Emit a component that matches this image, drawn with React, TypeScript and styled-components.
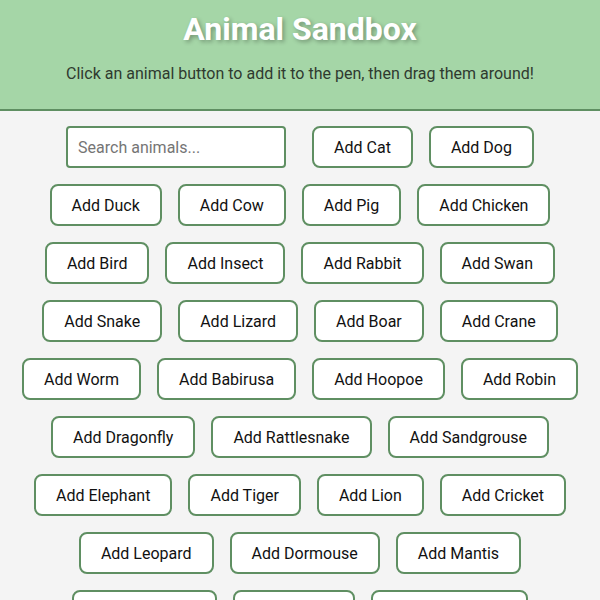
import React, { useState } from "react";
import styled, { createGlobalStyle } from "styled-components";

const GlobalStyle = createGlobalStyle`
  body {
    margin: 0;
    background: #f4f4f4;
    font-family: Roboto, "Liberation Sans", Arial, sans-serif;
  }
`;

const Header = styled.header`
  background: #a5d6a7;
  border-bottom: 2px solid #5f8f62;
  padding: 10px 20px;
  text-align: center;
`;

const Title = styled.h1`
  margin: 0;
  font-size: 32px;
  font-weight: 700;
  color: #fff;
  text-shadow: 2px 2px 4px rgba(0, 0, 0, 0.3);
`;

const Subtitle = styled.p`
  margin: 16px 0;
  font-size: 16px;
  color: #2f3a2f;
`;

const Controls = styled.div`
  display: flex;
  flex-wrap: wrap;
  justify-content: center;
  gap: 16px;
  padding: 15px 16px 16px;
`;

const SearchInput = styled.input`
  box-sizing: border-box;
  width: 220px;
  height: 42px;
  margin-right: 10px;
  padding: 10px;
  border: 2px solid #5f8f62;
  border-radius: 4px;
  background: #fff;
  font-family: inherit;
  font-size: 16px;
  color: #222;

  &::placeholder {
    color: #757575;
  }
`;

const AddButton = styled.button`
  box-sizing: border-box;
  height: 42px;
  padding: 10px 20px;
  border: 2px solid #5f8f62;
  border-radius: 8px;
  background: #fff;
  font-family: inherit;
  font-size: 16px;
  color: #111;
  cursor: pointer;
  transition: background 0.2s;

  &:hover {
    background: #e8f5e9;
  }
`;

const animals = [
  "Cat", "Dog", "Duck", "Cow", "Pig", "Chicken", "Bird", "Insect", "Rabbit",
  "Swan", "Snake", "Lizard", "Boar", "Crane", "Worm", "Babirusa", "Hoopoe",
  "Robin", "Dragonfly", "Rattlesnake", "Sandgrouse", "Elephant", "Tiger",
  "Lion", "Cricket", "Leopard", "Dormouse", "Mantis", "Kangaroo", "Camel",
  "Chameleon",
];

const App: React.FC = () => {
  const [query, setQuery] = useState("");

  const shown = animals.filter((a) =>
    a.toLowerCase().includes(query.toLowerCase())
  );

  return (
    <>
      <GlobalStyle />
      <Header>
        <Title>Animal Sandbox</Title>
        <Subtitle>
          Click an animal button to add it to the pen, then drag them around!
        </Subtitle>
      </Header>
      <Controls>
        <SearchInput
          placeholder="Search animals..."
          value={query}
          onChange={(e) => setQuery(e.target.value)}
        />
        {shown.map((animal) => (
          <AddButton key={animal}>Add {animal}</AddButton>
        ))}
      </Controls>
    </>
  );
};

export default App;
